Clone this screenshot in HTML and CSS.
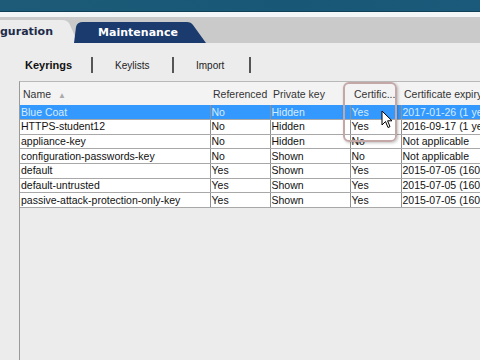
FILE: index.html
```html
<!DOCTYPE html>
<html>
<head>
  <title>Keyrings</title>
  <link rel="stylesheet" href="styles.css">
</head>
<body>
  <div class="topbar"></div>
  <div class="strip"></div>
  <div class="tabbar">
    <div class="tab tab-current">guration</div>
    <div class="tab tab-other">Maintenance</div>
  </div>

  <div class="content">
    <div class="subtabs">
      <span class="subtab active">Keyrings</span>
      <span class="sep"></span>
      <span class="subtab">Keylists</span>
      <span class="sep"></span>
      <span class="subtab">Import</span>
      <span class="sep"></span>
    </div>

    <div class="grid-wrap">
      <table class="grid">
        <thead>
          <tr>
            <th class="c-name">Name <span class="sort">&#9650;</span></th>
            <th class="c-ref">Referenced</th>
            <th class="c-priv">Private key</th>
            <th class="c-cert">Certific...</th>
            <th class="c-exp">Certificate expiry</th>
          </tr>
        </thead>
        <tbody>
          <tr class="selected"><td>Blue Coat</td><td>No</td><td>Hidden</td><td>Yes</td><td>2017-01-26 (1 year)</td></tr>
          <tr><td>HTTPS-student12</td><td>No</td><td>Hidden</td><td>Yes</td><td>2016-09-17 (1 year)</td></tr>
          <tr><td>appliance-key</td><td>No</td><td>Hidden</td><td>No</td><td>Not applicable</td></tr>
          <tr><td>configuration-passwords-key</td><td>No</td><td>Shown</td><td>No</td><td>Not applicable</td></tr>
          <tr><td>default</td><td>Yes</td><td>Shown</td><td>Yes</td><td>2015-07-05 (160 days)</td></tr>
          <tr><td>default-untrusted</td><td>Yes</td><td>Shown</td><td>Yes</td><td>2015-07-05 (160 days)</td></tr>
          <tr><td>passive-attack-protection-only-key</td><td>Yes</td><td>Shown</td><td>Yes</td><td>2015-07-05 (160 days)</td></tr>
        </tbody>
      </table>

      <!-- annotation box around the certificate column -->
      <div class="callout"></div>
      <svg class="cursor" width="12" height="20" viewBox="0 0 12 20">
        <path d="M1 1 L1 15 L4.5 11.5 L7 17.5 L9 16.6 L6.6 10.8 L11 10.8 Z" fill="#fff" stroke="#000" stroke-width="1"/>
      </svg>
    </div>
  </div>
</body>
</html>
```

FILE: styles.css
```css
html, body {
  margin: 0;
  height: 100%;
  overflow: hidden;
}

body {
  font-family: "Liberation Sans", Arial, sans-serif;
  background-color: #ececec;
  display: flex;
  flex-direction: column;
}

.topbar {
  height: 11px;
  background: linear-gradient(to right, #1d5b78, #185876 60%, #1b5a7a);
  border-bottom: 1px solid #0f4058;
}

.strip {
  height: 5px;
  background-color: #f2f6f7;
}

/* Main tabs */
.tabbar {
  height: 26px;
  background-color: #cacaca;
  display: flex;
  align-items: flex-end;
}

.tab {
  font-family: "DejaVu Sans", Verdana, sans-serif;
  font-weight: bold;
  font-size: 11px;
  display: flex;
  align-items: center;
  box-sizing: border-box;
}

.tab-current {
  width: 78px;
  height: 23px;
  background-color: #ececec;
  color: #1e2b4a;
  clip-path: path('M0 0 L62 0 Q68 0 70 5 L78 23 L0 23 Z');
}

.tab-other {
  width: 132px;
  height: 21px;
  margin-left: -4px;
  background-color: #1b3a6e;
  color: #fff;
  justify-content: center;
  padding-right: 4px;
  clip-path: path('M0 21 L2 5 Q3 0 9 0 L113 0 Q117 0 119 3 L132 21 Z');
}

/* Content */
.content {
  flex: 1;
  display: flex;
  flex-direction: column;
  background-color: #ececec;
}

.subtabs {
  display: flex;
  align-items: center;
  height: 18px;
  margin-top: 13px;
  padding-left: 25px;
  font-size: 10px;
  color: #222;
}

.subtab {
  width: 57px;
  padding-left: 22px;
}

.subtab.active {
  width: 66px;
  padding-left: 0;
  font-size: 11px;
  font-weight: bold;
  color: #111;
}

.subtab:nth-child(5) {
  width: 53px;
}

.sep {
  width: 2px;
  height: 16px;
  background-color: #555;
}

.grid-wrap {
  position: relative;
  flex: 1;
  margin-top: 7px;
  margin-left: 19px;
  border-left: 1px solid #9a9a9a;
  border-top: 1px solid #b8b8b8;
  overflow: hidden;
}

.grid {
  border-collapse: collapse;
  table-layout: fixed;
  width: 520px;
  font-size: 10.5px;
}

.grid th,
.grid td {
  box-sizing: border-box;
  white-space: nowrap;
  overflow: hidden;
}

.grid th {
  height: 23px;
  padding: 0 0 0 3px;
  text-align: left;
  font-weight: normal;
  color: #333;
  background-color: #f3f3f3;
}

.grid td {
  height: 14.67px;
  padding: 0 0 0 1px;
  background-color: #fff;
  color: #111;
  border-right: 1px solid #909090;
  border-bottom: 1px solid #a8a8a8;
  line-height: 13px;
}

.grid .selected td {
  background-color: #3399ff;
  color: #d6ebff;
}

.c-name { width: 190px; }
.c-ref  { width: 60px; }
.c-priv { width: 80px; }
.c-cert { width: 51px; }
.c-exp  { width: 139px; }

.grid th.c-cert {
  padding-left: 4px;
}

.sort {
  font-size: 8px;
  color: #aaa;
  margin-left: 4px;
}

.callout {
  position: absolute;
  left: 323px;
  top: 0;
  width: 50px;
  height: 56px;
  border: 2px solid #c4a8a8;
  border-radius: 6px;
  box-shadow: 1px 1px 3px rgba(0, 0, 0, 0.25);
}

.cursor {
  position: absolute;
  left: 361px;
  top: 28px;
}
```
